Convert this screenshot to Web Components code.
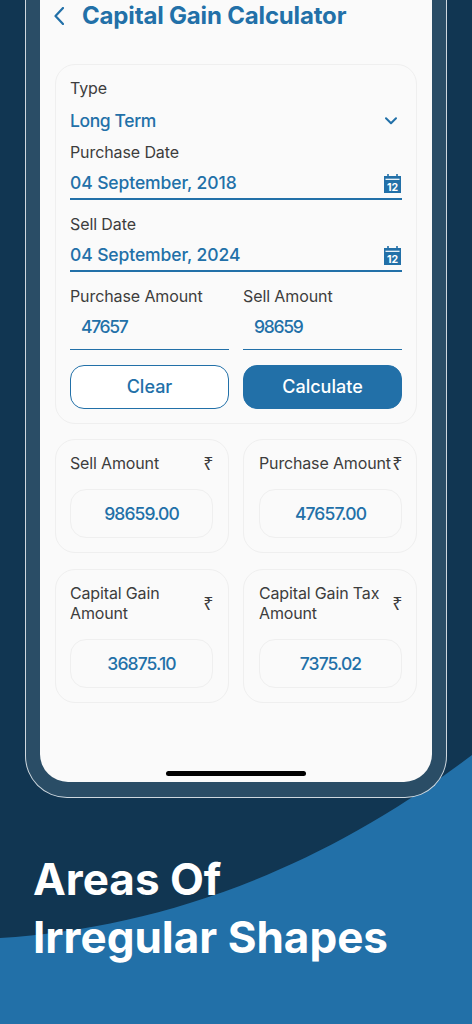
<!DOCTYPE html>
<html lang="en">
<head>
<meta charset="utf-8">
<title>Capital Gain Calculator</title>
<style>
  html, body { margin: 0; padding: 0; background: #113652; }
  body { font-family: Inter, "Noto Sans", sans-serif; }
</style>
</head>
<body>
<promo-stage headline-one="Areas Of" headline-two="Irregular Shapes">
  <phone-frame>
    <screen-header title="Capital Gain Calculator"></screen-header>
    <calc-form></calc-form>
    <div style="display:grid;grid-template-columns:174px 174px;gap:16px 14px;margin:15px 15px 0;">
      <result-card label="Sell Amount" value="98659.00"></result-card>
      <result-card class="right" label="Purchase Amount" value="47657.00"></result-card>
      <result-card label="Capital Gain Amount" value="36875.10"></result-card>
      <result-card class="right" label="Capital Gain Tax Amount" value="7375.02"></result-card>
    </div>
  </phone-frame>
</promo-stage>

<script>
const BLUE = "#2270a8";

class PromoStage extends HTMLElement {
  constructor() {
    super();
    this.attachShadow({ mode: "open" });
  }

  connectedCallback() {
    this.shadowRoot.innerHTML = `
      <style>
        :host { display: block; position: relative; width: 472px; height: 1024px; overflow: hidden; background: #113652; }
        .wave { position: absolute; left: 0; top: 0; }
        .content { position: relative; display: flex; flex-direction: column; height: 100%; }
        h1 {
          margin: 52px 0 0 33px;
          color: #fff;
          font: 700 44px/58px Inter, sans-serif;
          letter-spacing: 0;
        }
        h1 span { display: block; white-space: nowrap; }
      </style>
      <svg class="wave" width="472" height="1024" viewBox="0 0 472 1024">
        <path d="M0 938C150 928 310 878 472 755V1024H0Z" fill="${BLUE}"/>
      </svg>
      <div class="content">
        <slot></slot>
        <h1><span>${this.getAttribute("headline-one")}</span><span>${this.getAttribute("headline-two")}</span></h1>
      </div>
    `;
  }
}

class PhoneFrame extends HTMLElement {
  constructor() {
    super();
    this.attachShadow({ mode: "open" });
    this.shadowRoot.innerHTML = `
      <style>
        :host {
          display: block;
          box-sizing: border-box;
          flex: none;
          width: 422px;
          height: 798px;
          margin-left: 25px;
          padding: 0 14px 15px;
          background: #2a4d66;
          border: solid #cfd8df;
          border-width: 0 1px 1.5px;
          border-radius: 0 0 42px 42px;
        }
        .screen {
          box-sizing: border-box;
          display: flex;
          flex-direction: column;
          position: relative;
          height: 100%;
          background: #fafafa;
          border-radius: 0 0 28px 28px;
        }
        .home { position: absolute; left: 126px; bottom: 6px; width: 140px; height: 5px; border-radius: 3px; background: #000; }
      </style>
      <div class="screen">
        <slot></slot>
        <div class="home"></div>
      </div>
    `;
  }
}

class ScreenHeader extends HTMLElement {
  constructor() {
    super();
    this.attachShadow({ mode: "open" });
  }

  connectedCallback() {
    this.shadowRoot.innerHTML = `
      <style>
        :host { display: flex; align-items: center; height: 31px; margin-bottom: 33px; padding-left: 14px; color: ${BLUE}; }
        svg { flex: none; margin-right: 18px; }
        span { font: 700 24px/31px Inter, sans-serif; letter-spacing: -.17px; white-space: nowrap; }
      </style>
      <svg width="10" height="18" viewBox="0 0 10 18" fill="none" stroke="${BLUE}" stroke-width="2.2" stroke-linecap="round" stroke-linejoin="round"><path d="M9 1 1.5 9 9 17"/></svg>
      <span>${this.getAttribute("title")}</span>
    `;
  }
}

class CalcField extends HTMLElement {
  constructor() {
    super();
    this.attachShadow({ mode: "open" });
  }

  connectedCallback() {
    const icon = this.getAttribute("icon");
    const iconMarkup = icon === "calendar"
      ? `<svg class="icon" width="19" height="20" viewBox="0 0 19 20">
           <path d="M1 3h17v17H1z" fill="${BLUE}"/>
           <path d="M2.5 6.3h14" stroke="#fff" stroke-width="1.2"/>
           <path d="M5 1v4M14 1v4" stroke="${BLUE}" stroke-width="1.6"/>
           <text x="9.5" y="17.8" text-anchor="middle" fill="#fff" font-family="Inter, sans-serif" font-size="10.5" font-weight="700">12</text>
         </svg>`
      : icon === "chevron"
        ? `<svg class="icon" style="margin-right:5px" width="12" height="8" viewBox="0 0 12 8" fill="none" stroke="${BLUE}" stroke-width="2" stroke-linecap="round" stroke-linejoin="round"><path d="M1 1.2 6 6.3 11 1.2"/></svg>`
        : "";
    this.shadowRoot.innerHTML = `
      <style>
        :host { display: block; }
        .label { font: 400 16px/20px Inter, sans-serif; color: #3d3d3d; letter-spacing: -.1px; white-space: nowrap; }
        .row { display: flex; align-items: center; justify-content: space-between; height: 24px; margin-top: var(--value-gap, 9px); padding-left: var(--value-indent, 0); }
        .value { font: 500 17.5px/24px Inter, sans-serif; letter-spacing: var(--value-spacing, 0); color: ${BLUE}; white-space: nowrap; }
        .line { height: var(--line-size, 2px); margin-top: var(--line-gap, 3px); background: ${BLUE}; opacity: var(--line-opacity, 1); }
      </style>
      <div class="label">${this.getAttribute("label")}</div>
      <div class="row"><span class="value">${this.getAttribute("value")}</span>${iconMarkup}</div>
      ${this.hasAttribute("underline") ? `<div class="line"></div>` : ""}
    `;
  }
}

class CalcButton extends HTMLElement {
  constructor() {
    super();
    this.attachShadow({ mode: "open" });
    this.shadowRoot.innerHTML = `
      <style>
        :host {
          display: flex;
          align-items: center;
          justify-content: center;
          box-sizing: border-box;
          height: 44px;
          border-radius: 14px;
          font: 500 18px/24px Inter, sans-serif;
          border: 1px solid ${BLUE};
          color: ${BLUE};
          background: #fff;
        }
        :host([primary]) { background: ${BLUE}; color: #fff; }
      </style>
      <slot></slot>
    `;
  }
}

class CalcForm extends HTMLElement {
  constructor() {
    super();
    this.attachShadow({ mode: "open" });
    this.shadowRoot.innerHTML = `
      <style>
        :host {
          display: block;
          box-sizing: border-box;
          height: 360px;
          margin: 0 15px;
          padding: 13px 14px 0;
          border: 1px solid #efefef;
          border-radius: 20px;
        }
        .type { --value-gap: 11px; --value-spacing: -.38px; margin-bottom: 9px; }
        .date { --value-spacing: -.1px; margin-bottom: 14px; }
        .amounts { display: grid; grid-template-columns: 159px 159px; gap: 14px; --value-gap: 9px; --value-indent: 11px; --value-spacing: -1.3px; --line-gap: 10px; --line-size: 1px; }
        .buttons { display: grid; grid-template-columns: 159px 159px; gap: 14px; margin-top: 15px; }
      </style>
      <calc-field class="type" label="Type" value="Long Term" icon="chevron"></calc-field>
      <calc-field class="date" label="Purchase Date" value="04 September, 2018" icon="calendar" underline></calc-field>
      <calc-field class="date" label="Sell Date" value="04 September, 2024" icon="calendar" underline></calc-field>
      <div class="amounts">
        <calc-field label="Purchase Amount" value="47657" underline></calc-field>
        <calc-field label="Sell Amount" value="98659" underline></calc-field>
      </div>
      <div class="buttons">
        <calc-button>Clear</calc-button>
        <calc-button primary>Calculate</calc-button>
      </div>
    `;
  }
}

class ResultCard extends HTMLElement {
  constructor() {
    super();
    this.attachShadow({ mode: "open" });
  }

  connectedCallback() {
    this.shadowRoot.innerHTML = `
      <style>
        :host {
          display: flex;
          flex-direction: column;
          box-sizing: border-box;
          padding: 13px 15px 14px 14px;
          border: 1px solid #efefef;
          border-radius: 20px;
        }
        :host(.right) { padding-left: 15px; padding-right: 14px; }
        .top { display: flex; align-items: center; justify-content: space-between; flex: 1; }
        .label { font: 400 16px/20px Inter, sans-serif; color: #3d3d3d; letter-spacing: -.15px; }
        .rupee { flex: none; width: 9px; display: flex; justify-content: center; font: 400 18px/20px "Noto Sans", sans-serif; color: #3d3d3d; }
        .pill {
          display: flex;
          align-items: center;
          justify-content: center;
          height: 49px;
          margin-top: 16px;
          border: 1px solid #efefef;
          border-radius: 16px;
          box-sizing: border-box;
          font: 500 17.5px/24px Inter, sans-serif;
          letter-spacing: -.9px;
          color: ${BLUE};
        }
      </style>
      <div class="top"><span class="label">${this.getAttribute("label")}</span><span class="rupee">₹</span></div>
      <div class="pill">${this.getAttribute("value")}</div>
    `;
  }
}

customElements.define("promo-stage", PromoStage);
customElements.define("phone-frame", PhoneFrame);
customElements.define("screen-header", ScreenHeader);
customElements.define("calc-field", CalcField);
customElements.define("calc-button", CalcButton);
customElements.define("calc-form", CalcForm);
customElements.define("result-card", ResultCard);
</script>
</body>
</html>
